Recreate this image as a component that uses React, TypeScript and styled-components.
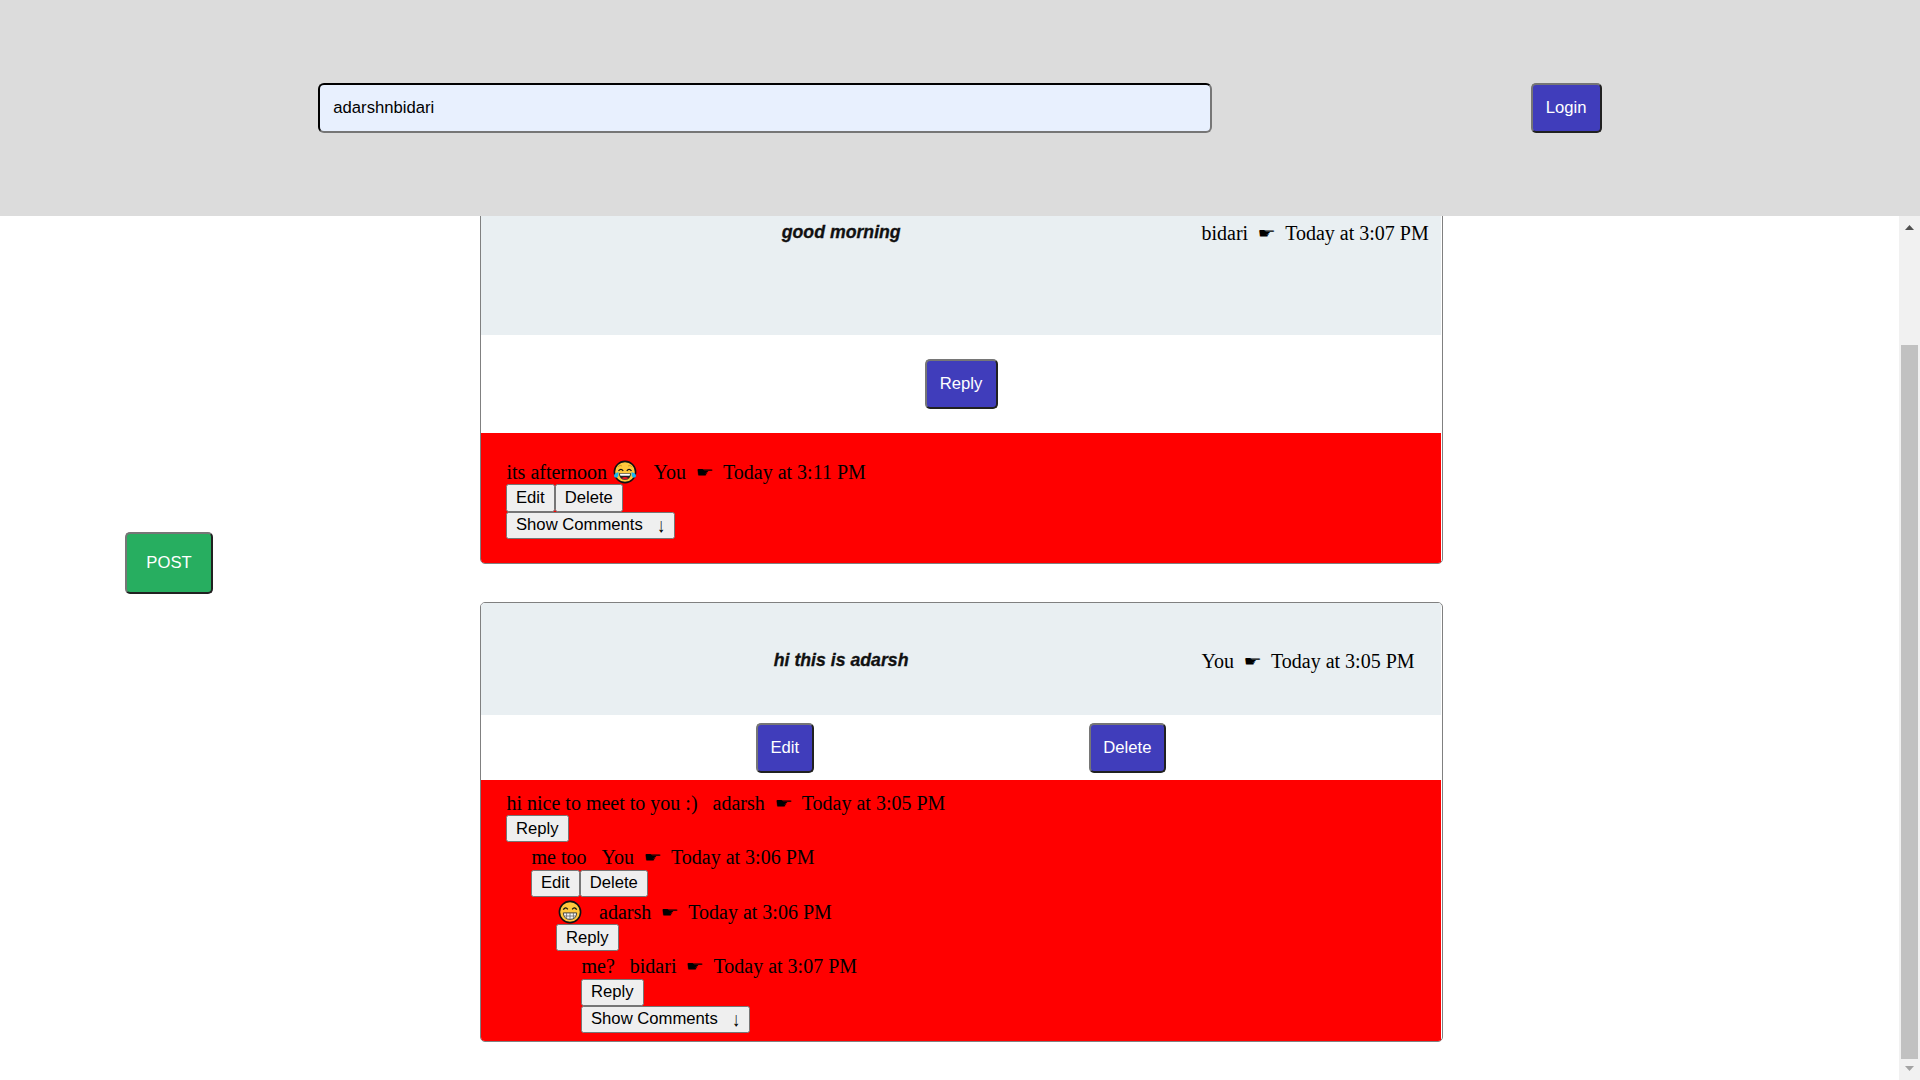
import React from "react";
import styled, { createGlobalStyle } from "styled-components";

const Global = createGlobalStyle`
  *, *::before, *::after { box-sizing: border-box; }
  html, body { margin: 0; padding: 0; background: #fff; overflow: hidden; }
  body { font-family: "Liberation Serif", "Times New Roman", serif; font-size: 20px; color: #000; }
`;

const sans = `"Liberation Sans", Arial, sans-serif`;

const TopBar = styled.header`
  position: fixed;
  inset: 0 0 auto 0;
  z-index: 2;
  height: 216px;
  background: #dcdcdc;
  display: flex;
  justify-content: space-evenly;
  align-items: center;
`;

const UserInput = styled.input`
  width: 894px;
  height: 50px;
  padding: 0 13px;
  border: 2px inset #767676;
  border-color: #212121 #767676 #767676 #212121;
  border-radius: 6px;
  background: #e8f0fe;
  color: #000;
  font: 16.667px ${sans};
  outline: none;
`;

const ActionButton = styled.button<{ $width: number }>`
  width: ${(p) => p.$width}px;
  height: 50px;
  padding: 0;
  border: 2px solid;
  border-color: #767676 #212121 #212121 #767676;
  border-radius: 5px;
  background: #403dbb;
  color: #fff;
  font: 16.667px ${sans};
`;

const PostButton = styled(ActionButton)`
  height: 62px;
  background: #27ae60;
`;

const Page = styled.div`
  height: 1080px;
  overflow: hidden;
  display: grid;
  grid-template-columns: 480px 963px 1fr 21px;
`;

const Side = styled.aside`
  padding: 532px 0 0 125px;
`;

const Feed = styled.main`
  padding-top: 124px;
  display: flex;
  flex-direction: column;
  gap: 38px;
`;

const Card = styled.article`
  border: 1px solid #808080;
  border-radius: 5px;
  padding-right: 1px;
  overflow: hidden;
  flex: none;
`;

const CardHead = styled.div<{ $height: number }>`
  height: ${(p) => p.$height}px;
  background: #e9eff2;
  display: grid;
  grid-template-columns: 3fr 1fr;
  align-items: center;
`;

const Title = styled.h3`
  margin: 0;
  padding-top: 1px;
  text-align: center;
  font: italic 700 20px/24px ${sans};
  color: #111;
`;

const Condensed = styled.span`
  display: inline-block;
  transform: scale(0.885, 0.96);
  -webkit-text-stroke: 0.35px #111;
`;

const Meta = styled.div`
  padding: 5px 0 0 0.5px;
  line-height: 22px;
  white-space: nowrap;
`;

const Pointer = styled.span`
  display: inline-block;
  width: 37px;
  text-align: center;
  font: 17px/16px "DejaVu Sans", sans-serif;
`;

const Hand = styled.span`
  display: inline-block;
  transform: translateY(-1px) scale(1.2, 0.85);
`;

const Actions = styled.div<{ $height: number; $top?: number }>`
  height: ${(p) => p.$height}px;
  padding-top: ${(p) => p.$top ?? 0}px;
  display: flex;
  justify-content: space-evenly;
  align-items: center;
`;

const Comments = styled.section<{ $top: number; $bottom: number }>`
  background: #f00;
  padding: ${(p) => p.$top}px 0 ${(p) => p.$bottom}px 25px;
`;

const Thread = styled.div<{ $depth: number }>`
  margin-left: ${(p) => p.$depth * 25}px;
  padding-top: 4px;
`;

const CommentLine = styled.div`
  height: 23.4px;
  line-height: 22.4px;
  padding: 0 0 1px 0.5px;
  display: flex;
  align-items: center;
  white-space: pre;
`;

const ButtonRow = styled.div`
  height: 27.2px;
  display: flex;
`;

const SmallButton = styled.button`
  height: 27.2px;
  padding: 0 8px;
  font: 16.667px ${sans};
  white-space: pre;
  flex: none;
`;

const ShowButton = styled(SmallButton)`
  width: 169px;
`;

const DownArrow = styled.span`
  display: inline-block;
  width: 10px;
  margin-left: 13px;
  text-align: center;
  font: 20px/16px "Liberation Serif", serif;
  transform: translateY(2px) scaleX(0.8);
`;

const EmojiBox = styled.svg<{ $left: number; $right: number }>`
  width: 24px;
  height: 24px;
  margin: 0 ${(p) => p.$right}px 0 ${(p) => p.$left}px;
  flex: none;
`;

const ScrollTrack = styled.div`
  background: #f1f1f1;
  padding: 225px 0 9px;
  display: flex;
  flex-direction: column;
  align-items: center;
`;

const ScrollArrow = styled.svg`
  width: 9px;
  height: 5px;
  flex: none;
`;

const Thumb = styled.div`
  width: 17px;
  height: 714px;
  margin: 115px 0 7px;
  background: #c1c1c1;
  flex: none;
`;

const Joy = () => (
  <EmojiBox $left={1} $right={16.5} viewBox="0 0 24 24">
    <circle cx="12" cy="12" r="10.6" fill="#ffc83d" stroke="#111" strokeWidth="1.6" />
    <path d="M5 6.6Q7 4.6 9 6M19 6.6Q17 4.6 15 6" fill="none" stroke="#d99a1c" strokeWidth="1" />
    <path d="M5.5 10.8Q8 7.8 10.2 10.8M13.8 10.8Q16 7.8 18.5 10.8" fill="none" stroke="#111" strokeWidth="1.3" />
    <path d="M6 13.2H18Q17.6 19.8 12 19.8T6 13.2Z" fill="#222" />
    <path d="M6.8 13.8H17.2L16.6 15.8H7.4Z" fill="#fff" />
    <path d="M8.5 18.3Q12 15.7 15.5 18.3Q12 20.4 8.5 18.3Z" fill="#e81224" />
    <path d="M5.6 12.2Q.6 13 1 16.4Q3.6 19 5.2 16.2ZM18.4 12.2Q23.4 13 23 16.4Q20.4 19 18.8 16.2Z" fill="#1bb5ee" />
  </EmojiBox>
);

const Grin = () => (
  <EmojiBox $left={1.5} $right={17} viewBox="0 0 24 24">
    <circle cx="12" cy="12" r="10.6" fill="#ffc83d" stroke="#111" strokeWidth="1.6" />
    <path d="M5.3 9.7Q7.6 6.2 9.8 9.4M14.2 9.4Q16.4 6.2 18.7 9.7" fill="none" stroke="#111" strokeWidth="1.3" />
    <path d="M5.3 12.9H18.7Q18.4 19.4 12 19.4T5.3 12.9Z" fill="#f5f5f5" stroke="#444" strokeWidth="1" />
    <path d="M6 16H18M8.6 13V18.5M12 13V19M15.4 13V18.5" fill="none" stroke="#666" strokeWidth=".8" />
  </EmojiBox>
);

type Stamp = { author: string; time: string };

const Signature = ({ author, time }: Stamp) => (
  <span>
    {author}
    <Pointer><Hand>☛</Hand></Pointer>
    {`Today at ${time} PM`}
  </span>
);

type CommentProps = Stamp & {
  depth?: number;
  text: React.ReactNode;
  buttons: string[];
  more?: boolean;
};

const Comment = ({ depth = 0, text, author, time, buttons, more }: CommentProps) => (
  <Thread $depth={depth}>
    <CommentLine>
      {text}
      <Signature author={author} time={time} />
    </CommentLine>
    <ButtonRow>
      {buttons.map((b) => (
        <SmallButton key={b}>{b}</SmallButton>
      ))}
    </ButtonRow>
    {more && (
      <ButtonRow>
        <ShowButton>
          Show Comments<DownArrow>↓</DownArrow>
        </ShowButton>
      </ButtonRow>
    )}
  </Thread>
);

export default function App() {
  return (
    <>
      <Global />
      <TopBar>
        <UserInput defaultValue="adarshnbidari" />
        <ActionButton $width={71}>Login</ActionButton>
      </TopBar>
      <Page>
        <Side>
          <PostButton $width={88}>POST</PostButton>
        </Side>
        <Feed>
          <Card>
            <CardHead $height={210}>
              <Title><Condensed>good morning</Condensed></Title>
              <Meta><Signature author="bidari" time="3:07" /></Meta>
            </CardHead>
            <Actions $height={98}>
              <ActionButton $width={73}>Reply</ActionButton>
            </Actions>
            <Comments $top={24} $bottom={24.2}>
              <Comment
                text={<>{"its afternoon "}<Joy /></>}
                author="You"
                time="3:11"
                buttons={["Edit", "Delete"]}
                more
              />
            </Comments>
          </Card>
          <Card>
            <CardHead $height={112}>
              <Title><Condensed>hi this is adarsh</Condensed></Title>
              <Meta><Signature author="You" time="3:05" /></Meta>
            </CardHead>
            <Actions $height={65} $top={1}>
              <ActionButton $width={58}>Edit</ActionButton>
              <ActionButton $width={77.5}>Delete</ActionButton>
            </Actions>
            <Comments $top={7.6} $bottom={7.8}>
              <Comment text="hi nice to meet to you :)   " author="adarsh" time="3:05" buttons={["Reply"]} />
              <Comment depth={1} text="me too   " author="You" time="3:06" buttons={["Edit", "Delete"]} />
              <Comment depth={2} text={<Grin />} author="adarsh" time="3:06" buttons={["Reply"]} />
              <Comment depth={3} text="me?   " author="bidari" time="3:07" buttons={["Reply"]} more />
            </Comments>
          </Card>
        </Feed>
        <div />
        <ScrollTrack>
          <ScrollArrow viewBox="0 0 9 5"><path d="M0 5L4.5 0L9 5Z" fill="#505050" /></ScrollArrow>
          <Thumb />
          <ScrollArrow viewBox="0 0 9 5"><path d="M0 0L4.5 5L9 0Z" fill="#a3a3a3" /></ScrollArrow>
        </ScrollTrack>
      </Page>
    </>
  );
}
